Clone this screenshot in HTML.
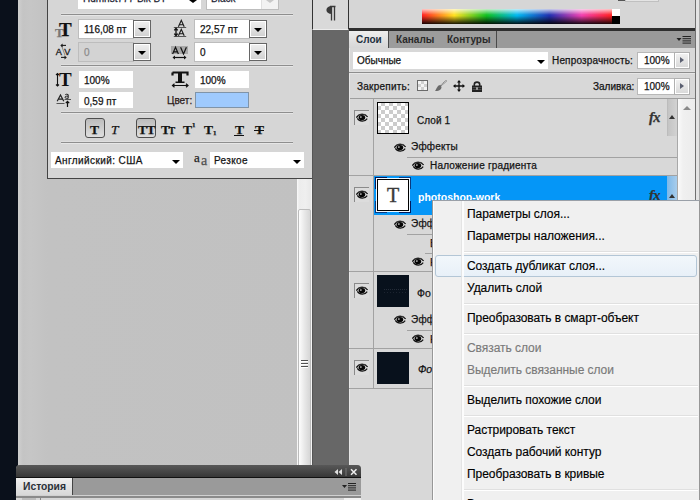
<!DOCTYPE html>
<html><head><meta charset="utf-8">
<style>
*{margin:0;padding:0;box-sizing:border-box}
html,body{width:700px;height:500px;overflow:hidden;background:#0a101b;font-family:"Liberation Sans",sans-serif;position:relative}
.a{position:absolute}
.t{position:absolute;white-space:nowrap;line-height:1;color:#141414;-webkit-text-stroke:0.25px currentColor}
.sep{position:absolute;height:2px;background:#8e8e8e;border-bottom:1px solid #e6e6e6;box-shadow:0 -1px 0 #dedede}
.inp{position:absolute;background:#fff;border:1px solid #bdbdbd}
.btn{position:absolute;border:1px solid #666;background:linear-gradient(#f0f0f0,#d0d0d0);box-shadow:inset 1px 1px 0 #fff,inset -1px -1px 0 #fff}
.tri{position:absolute;width:0;height:0;border-left:4px solid transparent;border-right:4px solid transparent;border-top:4.5px solid #000}
.eb{position:absolute;width:15px;height:15px;border-top:1px solid #8a8a8a;border-left:1px solid #8a8a8a;background:#dcdcdc}
.ms{position:absolute;left:464px;width:234px;height:2px;background:#e0e0e0;border-bottom:1px solid #fff}
.mi{position:absolute;left:467px;font-size:12px;letter-spacing:-0.05px;white-space:nowrap;line-height:1;color:#000;-webkit-text-stroke:0.15px currentColor}
.sv{position:absolute;overflow:visible}
</style></head><body>
<svg width="0" height="0" style="position:absolute">
 <defs>
  <symbol id="eye" viewBox="0 0 12 9">
   <path d="M0.4 4.6 C2.5 0.5 9 0.1 11.6 4" fill="none" stroke="#111" stroke-width="1.3"/>
   <path d="M2 2.4 C4 0.7 8.5 0.7 10.6 2.4" fill="none" stroke="#333" stroke-width="0.8"/>
   <path d="M1.3 5.4 C3.5 9 9 9 11.2 5.6" fill="none" stroke="#111" stroke-width="1.2"/>
   <ellipse cx="5.9" cy="4.6" rx="3.3" ry="2.6" fill="#050505"/>
   <circle cx="4.9" cy="4.1" r="0.8" fill="#eee"/>
  </symbol>
 </defs>
</svg>

<!-- left gray strip -->
<div class="a" style="left:18px;top:0;width:294px;height:500px;background:linear-gradient(90deg,#cfcfcf,#c4c4c4 5px,#c6c6c6 12px,#c2c2c2 30px,#c1c1c1)"></div>
<!-- char panel -->
<div class="a" style="left:47px;top:0;width:266px;height:179px;background:#d6d6d6;border-left:1px solid #444;border-bottom:1px solid #444;border-right:1px solid #444"></div>

<!-- left scrollbar -->
<div class="a" style="left:297px;top:179px;width:15px;height:321px;background:linear-gradient(90deg,#fafafa,#ececec 2px,#efefef 60%,#e8e8e8);border-right:1px solid #f4f4f4"></div>
<div class="a" style="left:298px;top:209px;width:13px;height:291px;border:1px solid #bcbcbc;border-radius:2px;background:linear-gradient(90deg,#fdfdfd,#e8e8e8 50%,#d6d6d6)"></div>
<div class="a" style="left:301px;top:360px;width:7px;height:1px;background:#505050;box-shadow:0 3px 0 #505050,0 6px 0 #505050,0 1px 0 #fff,0 4px 0 #fff,0 7px 0 #fff"></div>
<!-- dark gap -->
<div class="a" style="left:312px;top:0;width:37px;height:500px;background:#676767;border-left:1px solid #555"></div>
<div class="a" style="left:312px;top:0;width:37px;height:30px;background:#d9d9d9;border-left:1px solid #333;border-right:1px solid #333;border-bottom:1px solid #ececec"></div>
<svg class="sv" style="left:324px;top:5px" width="13" height="17" viewBox="0 0 13 17">
 <path d="M6 1.5 H11.5 M7.5 1.5 V15.5 M10.5 1.5 V15.5" stroke="#3a3a3a" stroke-width="1.3" fill="none"/>
 <path d="M8 1 C0.5 1 0.5 9 8 9 Z" fill="#3a3a3a"/>
</svg>

<!-- ===== character panel content ===== -->
<div class="a" style="left:78px;top:0;width:123px;height:9px;background:#fff"></div>
<div class="t" style="left:83px;top:-6px;font-size:10px;color:#1a2030">Humnst777 Blk BT</div>
<div class="tri" style="left:189px;top:0px;border-top-width:3px"></div>
<div class="a" style="left:206px;top:0;width:73px;height:10px;background:#fff;border:1px solid #bdbdbd;border-top:none"></div>
<div class="t" style="left:211px;top:-6px;font-size:10px;color:#1a2030">Black</div>
<div class="a" style="left:261px;top:0;width:17px;height:9px;background:#f2f2f2;border-left:1px solid #e0e0e0"></div>
<div class="tri" style="left:266px;top:0;border-top-color:#c8c8c8;border-top-width:3px"></div>
<div class="sep" style="left:61px;top:14px;width:232px"></div>
<div class="sep" style="left:61px;top:65px;width:232px"></div>
<div class="sep" style="left:61px;top:112px;width:232px"></div>
<div class="sep" style="left:61px;top:142px;width:232px"></div>

<div class="inp" style="left:78px;top:19px;width:56px;height:20px"></div>
<div class="t" style="left:84px;top:25px;font-size:10px">116,08 пт</div>
<div class="btn" style="left:133px;top:20px;width:18px;height:18px"></div>
<div class="tri" style="left:138px;top:28px"></div>

<div class="inp" style="left:78px;top:42px;width:56px;height:20px;background:#d3d3d3"></div>
<div class="t" style="left:84px;top:48px;font-size:10px;color:#8c8c8c">0</div>
<div class="btn" style="left:133px;top:43px;width:18px;height:18px"></div>
<div class="tri" style="left:138px;top:51px"></div>

<div class="inp" style="left:194px;top:19px;width:56px;height:20px"></div>
<div class="t" style="left:200px;top:25px;font-size:10px">22,57 пт</div>
<div class="btn" style="left:249px;top:20px;width:18px;height:18px"></div>
<div class="tri" style="left:254px;top:28px"></div>

<div class="inp" style="left:194px;top:42px;width:56px;height:20px"></div>
<div class="t" style="left:200px;top:48px;font-size:10px">0</div>
<div class="btn" style="left:249px;top:43px;width:18px;height:18px"></div>
<div class="tri" style="left:254px;top:51px"></div>

<div class="a" style="left:79px;top:71px;width:54px;height:17px;background:#fff"></div>
<div class="t" style="left:84px;top:76px;font-size:10px">100%</div>
<div class="a" style="left:79px;top:92px;width:54px;height:16px;background:#fff"></div>
<div class="t" style="left:84px;top:97px;font-size:10px">0,59 пт</div>
<div class="a" style="left:195px;top:71px;width:54px;height:17px;background:#fff"></div>
<div class="t" style="left:200px;top:76px;font-size:10px">100%</div>
<div class="t" style="left:167px;top:96px;font-size:10px;color:#2a1a1a">Цвет:</div>
<div class="a" style="left:195px;top:92px;width:54px;height:16px;background:#9fcafd;border:1px solid #8094a8"></div>

<!-- icons -->
<div class="t" style="left:55px;top:26px;font-family:'Liberation Serif';font-weight:bold;font-size:13px;color:#777">T</div>
<div class="t" style="left:59px;top:20px;font-family:'Liberation Serif';font-weight:bold;font-size:19px;color:#111">T</div>
<svg class="sv" style="left:55px;top:43px" width="18" height="18" viewBox="0 0 18 18">
 <path d="M6.6 2.8 L10 12.3" stroke="#8a8a8a" stroke-width="1"/>
 <text x="0.8" y="11.6" font-family="Liberation Sans" font-size="9.2" fill="#1a1a1a" stroke="#1a1a1a" stroke-width="0.3">A</text>
 <text x="9.2" y="11.6" font-family="Liberation Sans" font-size="9.2" fill="#1a1a1a" stroke="#1a1a1a" stroke-width="0.3">V</text>
 <path d="M6.5 2.4 H11" stroke="#1a1a1a" stroke-width="1.1"/>
 <path d="M5.3 2.4 L7.6 0.4 L7.6 4.4 Z" fill="#1a1a1a"/>
 <path d="M6 14.4 H10.5" stroke="#1a1a1a" stroke-width="1.1"/>
 <path d="M11.8 14.4 L9.5 12.4 L9.5 16.4 Z" fill="#1a1a1a"/>
</svg>
<svg class="sv" style="left:173px;top:19px" width="15" height="19" viewBox="0 0 15 19">
 <path d="M5.4 7.7 L8.3 1.3 L11.2 7.7 M6.4 5.7 H10.2" stroke="#1a1a1a" stroke-width="1.15" fill="none"/>
 <path d="M5.4 16.7 L8.3 10.3 L11.2 16.7 M6.4 14.7 H10.2" stroke="#1a1a1a" stroke-width="1.15" fill="none"/>
 <path d="M0.8 8.5 H13.2 M0.8 17.5 H13.2" stroke="#555" stroke-width="1"/>
 <path d="M3 10 V16 M1.3 11.3 L3 9.3 L4.7 11.3 M1.3 14.7 L3 16.7 L4.7 14.7" stroke="#111" stroke-width="1.3" fill="none"/>
</svg>
<svg class="sv" style="left:171px;top:46px" width="18" height="14" viewBox="0 0 18 14">
 <rect x="0" y="0" width="17" height="8" fill="#a8a8a8"/>
 <path d="M1.6 8 L4.5 1.2 L7.4 8 M2.6 5.8 H6.4 M9.6 1.2 L12.5 8 L15.4 1.2" stroke="#111" stroke-width="1.2" fill="none"/>
 <path d="M2.5 11.5 H14.5" stroke="#111" stroke-width="1.2"/>
 <path d="M1.5 11.5 L4 9.5 V13.5 Z M15.5 11.5 L13 9.5 V13.5 Z" fill="#111"/>
</svg>
<svg class="sv" style="left:55px;top:72px" width="19" height="16" viewBox="0 0 19 16">
 <path d="M2.5 1.5 V14 M1 3 L2.5 1.5 L4 3 M1 12.5 L2.5 14 L4 12.5" stroke="#111" stroke-width="1.1" fill="none"/>
 <text x="4" y="14" font-family="Liberation Serif" font-weight="bold" font-size="19" fill="#111">T</text>
</svg>
<svg class="sv" style="left:56px;top:93px" width="16" height="15" viewBox="0 0 16 15">
 <path d="M1.2 8.3 L4.5 2 L7.8 8.3 M2.7 6.1 H6.3" stroke="#222" stroke-width="1.2" fill="none"/>
 <path d="M0.5 10.5 H8.5" stroke="#555" stroke-width="1"/>
 <path d="M9.3 1.6 Q10.7 0.8 12.2 1.6 V5.4 M12.2 3.2 H10.4 Q9.1 3.2 9.1 4.3 Q9.1 5.3 10.4 5.3 H12.2" stroke="#222" stroke-width="1" fill="none"/>
 <path d="M8.5 6.5 H15" stroke="#555" stroke-width="1"/>
 <path d="M11.5 8.3 V14 M9.8 10.2 L11.5 8.3 L13.2 10.2" stroke="#111" stroke-width="1.2" fill="none"/>
</svg>
<svg class="sv" style="left:171px;top:71px" width="19" height="17" viewBox="0 0 19 17">
 <path d="M1.5 1.5 H16.5 V4.5 M1.5 1.5 V4.5" stroke="#111" stroke-width="2.2" fill="none"/>
 <rect x="7" y="1" width="4" height="10.5" fill="#111"/>
 <rect x="4.5" y="10.5" width="9" height="1.5" fill="#111"/>
 <path d="M1.5 14.5 H17 M3.5 12.8 L1.5 14.5 L3.5 16.2 M15 12.8 L17 14.5 L15 16.2" stroke="#111" stroke-width="1.2" fill="none"/>
</svg>

<!-- style buttons -->
<div class="a" style="left:85px;top:118px;width:20px;height:20px;border:1px solid #4e4e4e;border-radius:3px;background:linear-gradient(#bcbcbc,#dedede)"></div>
<div class="t" style="left:90px;top:123px;font-family:'Liberation Serif';font-weight:bold;font-size:13.5px">T</div>
<div class="t" style="left:111px;top:123px;font-family:'Liberation Serif';font-style:italic;font-size:13.5px">T</div>
<div class="a" style="left:136px;top:118px;width:20px;height:20px;border:1px solid #4e4e4e;border-radius:3px;background:linear-gradient(#bcbcbc,#dedede)"></div>
<div class="t" style="left:138px;top:123px;font-family:'Liberation Serif';font-weight:bold;font-size:13.5px;letter-spacing:-0.5px">TT</div>
<div class="t" style="left:161px;top:123px;font-family:'Liberation Serif';font-weight:bold;font-size:13.5px;letter-spacing:-1.5px">T<span style="font-size:10px">T</span></div>
<div class="t" style="left:183px;top:123px;font-family:'Liberation Serif';font-weight:bold;font-size:13.5px">T</div>
<div class="t" style="left:192px;top:122px;font-family:'Liberation Serif';font-weight:bold;font-size:7px">1</div>
<div class="t" style="left:204px;top:123px;font-family:'Liberation Serif';font-weight:bold;font-size:13.5px">T</div>
<div class="t" style="left:213px;top:130px;font-family:'Liberation Serif';font-weight:bold;font-size:7px">1</div>
<div class="t" style="left:235px;top:123px;font-family:'Liberation Serif';font-weight:bold;font-size:13.5px">T</div>
<div class="a" style="left:234px;top:135px;width:10px;height:1px;background:#111"></div>
<div class="t" style="left:255px;top:123px;font-family:'Liberation Serif';font-weight:bold;font-size:13.5px">T</div>
<div class="a" style="left:254px;top:130px;width:10px;height:1px;background:#111"></div>

<div class="a" style="left:51px;top:152px;width:132px;height:16px;background:#fff"></div>
<div class="t" style="left:55px;top:156px;font-size:10px;letter-spacing:0.4px">Английский: США</div>
<div class="tri" style="left:172px;top:160px"></div>
<div class="t" style="left:194px;top:151px;font-family:'Liberation Serif';font-size:13px;color:#222">a</div>
<div class="t" style="left:201px;top:154px;font-family:'Liberation Serif';font-size:14px;color:#505050">a</div>
<div class="a" style="left:210px;top:152px;width:94px;height:16px;background:#fff"></div>
<div class="t" style="left:214px;top:156px;font-size:10px;letter-spacing:0.37px">Резкое</div>
<div class="tri" style="left:293px;top:160px"></div>

<!-- ===== right panel ===== -->

<div class="a" style="left:349px;top:0;width:351px;height:28px;background:#d6d6d6"></div>
<div class="a" style="left:422px;top:9px;width:190px;height:15px;background:linear-gradient(90deg,#ff2020,#ffe020 17%,#10c020 34%,#00b8f0 50%,#2030b0 67%,#f040b0 84%,#ff2020)"></div>
<div class="a" style="left:422px;top:9px;width:190px;height:15px;background:linear-gradient(rgba(255,255,255,.75),rgba(255,255,255,0) 40%,rgba(0,0,0,0) 45%,rgba(0,0,0,.9) 100%)"></div>
<div class="a" style="left:612px;top:9px;width:8px;height:7px;background:#fff"></div>
<div class="a" style="left:618px;top:0;width:7px;height:1px;background:#555"></div>
<div class="a" style="left:625px;top:0;width:34px;height:2px;background:#e4e4e4;border:1px solid #c0c0c0;border-top:none"></div>
<div class="a" style="left:612px;top:16px;width:8px;height:8px;background:#000"></div>
<div class="a" style="left:349px;top:28px;width:351px;height:3px;background:#2e2e2e"></div>
<!-- tabs -->
<div class="a" style="left:349px;top:31px;width:346px;height:17px;background:#9a9a9a"></div>
<div class="a" style="left:349px;top:31px;width:39px;height:17px;background:linear-gradient(#eeeeee,#d6d6d6)"></div>
<div class="t" style="left:356px;top:35px;font-size:10px;font-weight:bold;color:#223040;-webkit-text-stroke:0">Слои</div>
<div class="a" style="left:388px;top:31px;width:52px;height:17px;background:#9c9c9c;border-left:1px solid #4a4a4a;border-right:1px solid #4a4a4a"></div>
<div class="t" style="left:396px;top:35px;font-size:10px;font-weight:bold;color:#2a2a2a;-webkit-text-stroke:0">Каналы</div>
<div class="a" style="left:439px;top:31px;width:58px;height:17px;background:#9c9c9c;border-right:1px solid #4a4a4a"></div>
<div class="t" style="left:447px;top:35px;font-size:10px;font-weight:bold;color:#2a2a2a;-webkit-text-stroke:0">Контуры</div>
<svg class="sv" style="left:676px;top:35px" width="16" height="9" viewBox="0 0 16 9">
 <path d="M0.5 3 H5.5 L3 6 Z" fill="#222"/>
 <path d="M6.5 1.5 H15 M6.5 3.7 H15 M6.5 5.9 H15 M6.5 8.1 H15" stroke="#222" stroke-width="1"/>
</svg>
<!-- layers body -->
<div class="a" style="left:349px;top:48px;width:346px;height:452px;background:#d8d8d8;border-left:1px solid #e6e6e6"></div>
<div class="a" style="left:695px;top:0;width:5px;height:500px;background:#e4e4e4;border-left:1px solid #707070"></div>
<div class="a" style="left:699px;top:0;width:1px;height:500px;background:#a8a8a8"></div>
<div class="a" style="left:353px;top:52px;width:195px;height:17px;background:#fff"></div>
<div class="t" style="left:357px;top:56px;font-size:10px">Обычные</div>
<div class="tri" style="left:537px;top:60px"></div>
<div class="t" style="left:552px;top:56px;font-size:10px;letter-spacing:0.16px">Непрозрачность:</div>
<div class="inp" style="left:637px;top:52px;width:38px;height:17px;border-color:#b8b8b8"></div>
<div class="t" style="left:644px;top:56px;font-size:10px">100%</div>
<div class="btn" style="left:674px;top:52px;width:16px;height:17px;border-color:#b0b0b0;background:linear-gradient(#f2f2f2,#d8d8d8)"></div>
<div class="a" style="left:680px;top:57px;width:0;height:0;border-top:3px solid transparent;border-bottom:3px solid transparent;border-left:4px solid #5a5f70"></div>
<div class="sep" style="left:349px;top:72px;width:346px"></div>
<div class="t" style="left:357px;top:82px;font-size:10px;letter-spacing:0.23px">Закрепить:</div>
<div class="t" style="left:593px;top:82px;font-size:10px">Заливка:</div>
<div class="inp" style="left:637px;top:78px;width:38px;height:17px;border-color:#b8b8b8"></div>
<div class="t" style="left:644px;top:82px;font-size:10px">100%</div>
<div class="btn" style="left:674px;top:78px;width:16px;height:17px;border-color:#b0b0b0;background:linear-gradient(#f2f2f2,#d8d8d8)"></div>
<div class="a" style="left:680px;top:83px;width:0;height:0;border-top:3px solid transparent;border-bottom:3px solid transparent;border-left:4px solid #5a5f70"></div>
<!-- lock icons -->
<div class="a" style="left:417px;top:80px;width:11px;height:11px;border:1px solid #6a6a6a;background-color:#f4f4f4;background-image:linear-gradient(45deg,#d0d0d0 25%,transparent 25%,transparent 75%,#d0d0d0 75%),linear-gradient(45deg,#d0d0d0 25%,transparent 25%,transparent 75%,#d0d0d0 75%);background-size:6px 6px;background-position:0 0,3px 3px"></div>
<svg class="sv" style="left:434px;top:80px" width="13" height="12" viewBox="0 0 13 12">
 <path d="M12.5 0.5 L6 6.5" stroke="#777" stroke-width="1.6" stroke-dasharray="1 0.6"/>
 <path d="M6.5 5 C3.5 5 3 8 1 11 C4 11.5 7.5 10 7.5 7 Z" fill="#6a6a6a"/>
</svg>
<svg class="sv" style="left:453px;top:80px" width="12" height="12" viewBox="0 0 12 12">
 <path d="M6 1 V11 M1 6 H11" stroke="#111" stroke-width="1.3"/>
 <path d="M6 0 L8 2.5 H4 Z M6 12 L8 9.5 H4 Z M0 6 L2.5 4 V8 Z M12 6 L9.5 4 V8 Z" fill="#111"/>
</svg>
<svg class="sv" style="left:472px;top:81px" width="10" height="11" viewBox="0 0 10 11">
 <path d="M2.3 5 V3.5 C2.3 0.3 7.7 0.3 7.7 3.5 V5" stroke="#222" stroke-width="1.6" fill="none"/>
 <rect x="0" y="4.5" width="10" height="6.5" fill="#222"/>
 <path d="M0.5 6.5 H9.5 M0.5 8.5 H9.5" stroke="#666" stroke-width="0.6"/>
 <rect x="4.2" y="6.3" width="1.6" height="2.5" fill="#bbb"/>
</svg>
<div class="a" style="left:350px;top:98px;width:345px;height:1px;background:#9e9e9e"></div>
<!-- layers list -->
<div class="a" style="left:677px;top:99px;width:18px;height:401px;background:linear-gradient(90deg,#fafafa,#f0f0f0 30%,#ececec);border-left:1px solid #a8a8a8"></div>
<div class="a" style="left:683px;top:106px;width:0;height:0;border-left:4px solid transparent;border-right:4px solid transparent;border-bottom:4px solid #8a8a8a"></div>
<div class="a" style="left:373px;top:99px;width:1px;height:289px;background:#a2a2a2"></div>
<div class="a" style="left:349px;top:175px;width:328px;height:1px;background:#a2a2a2"></div>
<div class="a" style="left:349px;top:271px;width:328px;height:1px;background:#a2a2a2"></div>
<div class="a" style="left:349px;top:348px;width:328px;height:1px;background:#a2a2a2"></div>
<div class="a" style="left:349px;top:388px;width:328px;height:1px;background:#a2a2a2"></div>
<div class="a" style="left:407px;top:157px;width:270px;height:1px;background:#a2a2a2"></div>
<div class="a" style="left:407px;top:234px;width:270px;height:1px;background:#a2a2a2"></div>
<div class="a" style="left:425px;top:253px;width:252px;height:1px;background:#a2a2a2"></div>
<div class="a" style="left:407px;top:330px;width:270px;height:1px;background:#a2a2a2"></div>
<!-- layer 1 -->
<div class="a" style="left:667px;top:99px;width:10px;height:37px;background:linear-gradient(90deg,#c4c4c4,#d2d2d2);border-left:1px solid #bcbcbc"></div>
<div class="a" style="left:669px;top:115px;width:0;height:0;border-left:3.5px solid transparent;border-right:3.5px solid transparent;border-bottom:4px solid #333"></div>
<div class="t" style="left:649px;top:110px;font-family:'Liberation Serif';font-style:italic;font-weight:bold;font-size:14.5px;color:#333;letter-spacing:-0.5px">fx</div>
<div class="eb" style="left:354px;top:110px"></div>
<svg class="sv" style="left:356px;top:113px" width="12" height="9"><use href="#eye"/></svg>
<div class="a" style="left:377px;top:102px;width:32px;height:32px;border:1px solid #000;background-color:#fff;background-image:linear-gradient(45deg,#cccccc 25%,transparent 25%,transparent 75%,#cccccc 75%),linear-gradient(45deg,#cccccc 25%,transparent 25%,transparent 75%,#cccccc 75%);background-size:8px 8px;background-position:-1px -1px,3px 3px"></div>
<div class="t" style="left:417px;top:116px;font-size:10px;letter-spacing:0.06px">Слой 1</div>
<svg class="sv" style="left:394px;top:143px" width="12" height="9"><use href="#eye"/></svg>
<div class="t" style="left:411px;top:142px;font-size:10px;letter-spacing:0.22px">Эффекты</div>
<svg class="sv" style="left:412px;top:161px" width="12" height="9"><use href="#eye"/></svg>
<div class="t" style="left:430px;top:161px;font-size:10px;letter-spacing:0.2px">Наложение градиента</div>
<!-- layer 2 selected -->
<div class="a" style="left:374px;top:176px;width:303px;height:39px;background:#0596f7"></div>
<div class="a" style="left:667px;top:176px;width:10px;height:39px;background:linear-gradient(90deg,#7db8e8,#a8cdec)"></div>
<div class="a" style="left:669px;top:194px;width:0;height:0;border-left:3.5px solid transparent;border-right:3.5px solid transparent;border-bottom:4px solid #333"></div>
<div class="t" style="left:649px;top:188px;font-family:'Liberation Serif';font-style:italic;font-weight:bold;font-size:14.5px;color:#333;letter-spacing:-0.5px">fx</div>
<div class="eb" style="left:354px;top:187px"></div>
<svg class="sv" style="left:356px;top:190px" width="12" height="9"><use href="#eye"/></svg>
<div class="a" style="left:375px;top:177px;width:12px;height:1px;background:#001a5c"></div>
<div class="a" style="left:399px;top:212px;width:12px;height:1px;background:#001a5c"></div>
<div class="a" style="left:375px;top:177px;width:1px;height:12px;background:#001a5c"></div>
<div class="a" style="left:410px;top:201px;width:1px;height:12px;background:#001a5c"></div>
<div class="a" style="left:399px;top:177px;width:12px;height:1px;background:#0a3a80"></div>
<div class="a" style="left:375px;top:212px;width:12px;height:1px;background:#0a3a80"></div>
<div class="a" style="left:410px;top:177px;width:1px;height:12px;background:#0a3a80"></div>
<div class="a" style="left:375px;top:201px;width:1px;height:12px;background:#0a3a80"></div>
<div class="a" style="left:376px;top:178px;width:34px;height:34px;background:#fff;border:1px solid #f4fbff"></div>
<div class="a" style="left:377px;top:179px;width:32px;height:32px;background:#fff;border:1px solid #000"></div>
<div class="t" style="left:387px;top:185px;font-family:'Liberation Serif';font-size:20px;color:#3a3a3a;-webkit-text-stroke:0.4px #3a3a3a">T</div>
<div class="t" style="left:418px;top:192px;font-size:10.5px;font-weight:bold;color:#fff;-webkit-text-stroke:0">photoshop-work</div>
<svg class="sv" style="left:394px;top:220px" width="12" height="9"><use href="#eye"/></svg>
<div class="t" style="left:411px;top:219px;font-size:10px;letter-spacing:0.22px">Эффекты</div>
<div class="t" style="left:430px;top:238px;font-size:10.5px">В</div>
<svg class="sv" style="left:412px;top:257px" width="12" height="9"><use href="#eye"/></svg>
<div class="t" style="left:430px;top:257px;font-size:10.5px">Н</div>
<!-- layer 3 -->
<div class="eb" style="left:354px;top:283px"></div>
<svg class="sv" style="left:356px;top:286px" width="12" height="9"><use href="#eye"/></svg>
<div class="a" style="left:377px;top:275px;width:32px;height:32px;background:#08111c"></div>
<div class="a" style="left:384px;top:289px;width:24px;height:1px;background:repeating-linear-gradient(90deg,#242c38 0 1px,transparent 1px 2px)"></div>
<div class="a" style="left:384px;top:292px;width:24px;height:1px;background:repeating-linear-gradient(90deg,#1c2430 0 1px,transparent 1px 3px)"></div>
<div class="t" style="left:417px;top:288px;font-size:10.5px">Фо</div>
<svg class="sv" style="left:394px;top:315px" width="12" height="9"><use href="#eye"/></svg>
<div class="t" style="left:411px;top:315px;font-size:10px;letter-spacing:0.22px">Эффекты</div>
<svg class="sv" style="left:412px;top:334px" width="12" height="9"><use href="#eye"/></svg>
<div class="t" style="left:430px;top:334px;font-size:10.5px">Н</div>
<!-- layer 4 -->
<div class="eb" style="left:354px;top:360px"></div>
<svg class="sv" style="left:356px;top:363px" width="12" height="9"><use href="#eye"/></svg>
<div class="a" style="left:377px;top:352px;width:32px;height:32px;background:#08111c"></div>
<div class="t" style="left:418px;top:364px;font-size:10.5px;font-style:italic">Фо</div>

<!-- context menu -->
<div class="a" style="left:432px;top:200px;width:268px;height:300px;background:#f0f0f0;border-left:1px solid #979797;border-top:1px solid #9aa0a8;border-right:1px solid #979797"></div>
<div class="a" style="left:433px;top:201px;width:1px;height:299px;background:#fcfcfc"></div>
<div class="a" style="left:435px;top:255px;width:262px;height:22px;border:1px solid #b3c6d6;border-radius:3px;background:linear-gradient(#f2f7fb,#e8f0f8)"></div>
<div class="a" style="left:461px;top:201px;width:3px;height:299px;background:#e2e3e3;border-right:2px solid #fff;opacity:.85"></div>
<div class="mi" style="top:208px">Параметры слоя...</div>
<div class="mi" style="top:230px">Параметры наложения...</div>
<div class="ms" style="top:251px"></div>
<div class="mi" style="top:260px">Создать дубликат слоя...</div>
<div class="mi" style="top:282px">Удалить слой</div>
<div class="ms" style="top:303px"></div>
<div class="mi" style="top:312px">Преобразовать в смарт-объект</div>
<div class="ms" style="top:333px"></div>
<div class="mi" style="top:342px;color:#7a7a7a">Связать слои</div>
<div class="mi" style="top:364px;color:#7a7a7a">Выделить связанные слои</div>
<div class="ms" style="top:385px"></div>
<div class="mi" style="top:394px">Выделить похожие слои</div>
<div class="ms" style="top:415px"></div>
<div class="mi" style="top:424px">Растрировать текст</div>
<div class="mi" style="top:446px">Создать рабочий контур</div>
<div class="mi" style="top:468px">Преобразовать в кривые</div>
<div class="ms" style="top:489px"></div>
<div class="mi" style="top:498px">Выделить</div>

<!-- history panel -->
<div class="a" style="left:16px;top:465px;width:345px;height:35px;background:#9a9a9a;border-radius:4px 4px 0 0;overflow:hidden">
  <div class="a" style="left:0;top:0;width:345px;height:13px;background:linear-gradient(#585858,#343434)"></div>
  <div class="a" style="left:0;top:12px;width:345px;height:1px;background:#111"></div>
  <div class="a" style="left:0;top:13px;width:56px;height:18px;background:linear-gradient(#f0f0f0,#d6d6d6)"></div>
  <div class="a" style="left:56px;top:13px;width:1px;height:17px;background:#444"></div>
  <div class="a" style="left:0;top:30px;width:345px;height:1px;background:#d0d0d0"></div>
  <div class="a" style="left:0;top:31px;width:345px;height:2px;background:#8a8a8a"></div>
  <div class="a" style="left:0;top:33px;width:345px;height:2px;background:#d6d6d6"></div>
  <div class="a" style="left:24px;top:33px;width:1px;height:2px;background:#888"></div>
  <div class="a" style="left:6px;top:33px;width:14px;height:2px;background:#bbb"></div>
  <div class="a" style="left:328px;top:33px;width:17px;height:2px;background:#f2f2f2"></div>
</div>
<div class="t" style="left:23px;top:482px;font-size:10.3px;font-weight:bold;color:#2a3038;-webkit-text-stroke:0">История</div>
<svg class="sv" style="left:334px;top:469px" width="24" height="6" viewBox="0 0 24 6">
 <path d="M4 0 L0.5 3 L4 6 Z M8 0 L4.5 3 L8 6 Z" fill="#e0e0e0"/>
 <path d="M12 -1 V7" stroke="#777" stroke-width="1"/>
 <path d="M17 0.2 L22.5 5.8 M22.5 0.2 L17 5.8" stroke="#eee" stroke-width="1.5"/>
</svg>
<svg class="sv" style="left:342px;top:482px" width="15" height="9" viewBox="0 0 15 9">
 <path d="M0 3 H5 L2.5 6 Z" fill="#222"/>
 <path d="M6 1.5 H14 M6 3.7 H14 M6 5.9 H14 M6 8.1 H14" stroke="#222" stroke-width="1"/>
</svg>
</body></html>
